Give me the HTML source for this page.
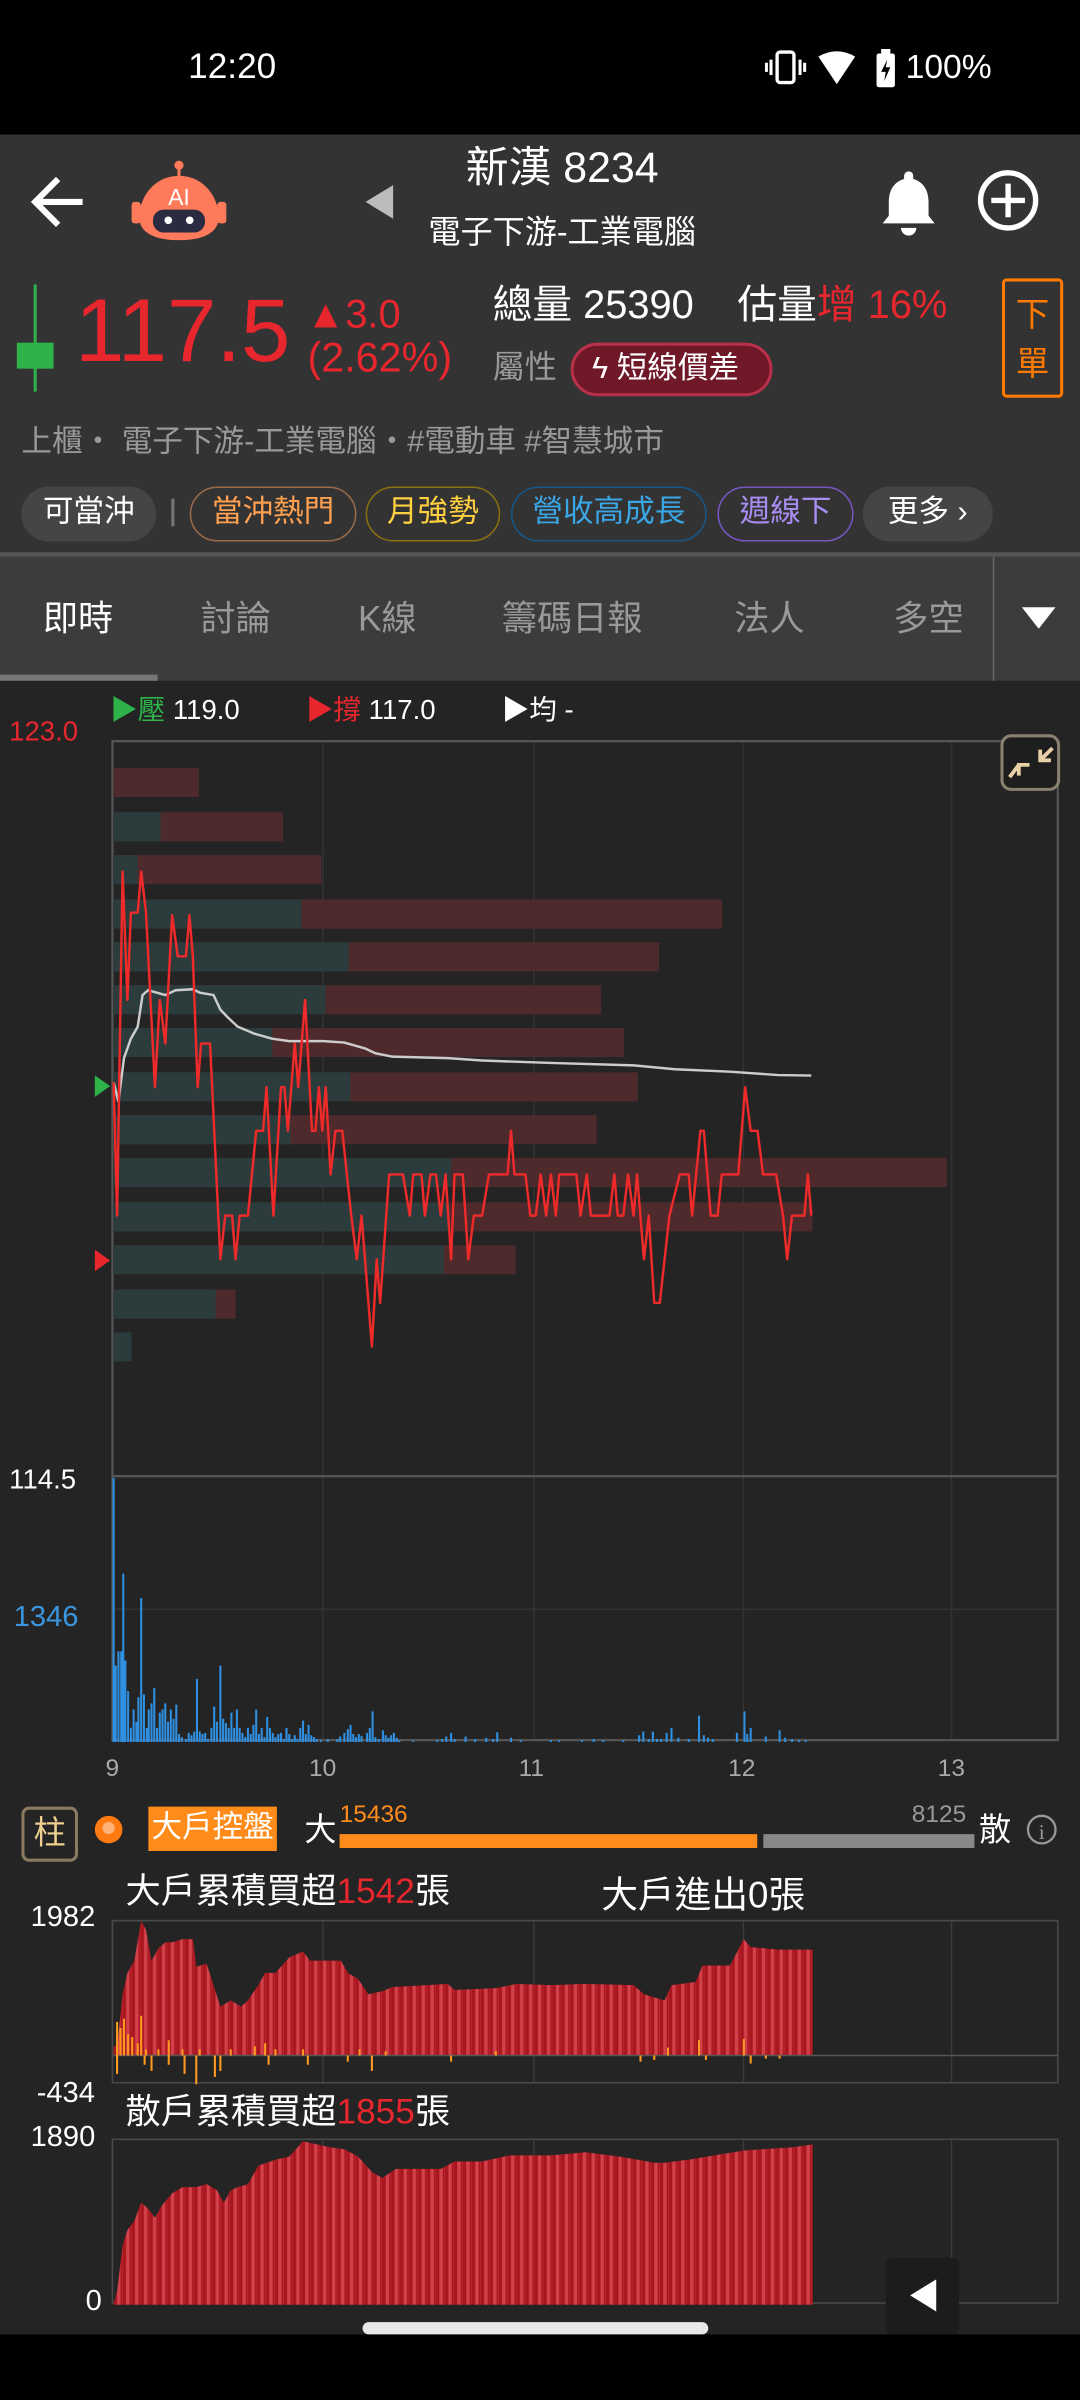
<!DOCTYPE html>
<html><head><meta charset="utf-8">
<style>
*{margin:0;padding:0;box-sizing:border-box}
html,body{width:1080px;height:2400px;overflow:hidden;background:#000}
#w{position:absolute;left:0;top:0;width:706px;height:1569px;transform:scale(1.52975);transform-origin:0 0;font-family:"Liberation Sans","Noto Sans CJK TC",sans-serif;color:#fff;background:#242424}
.a{position:absolute;white-space:nowrap;line-height:1}
.chip{position:absolute;top:318px;height:36px;border-radius:18px;border:1.5px solid;font-size:20px;line-height:33px;text-align:center}
</style></head><body><div id="w">
<!-- status bar -->
<div class="a" style="left:0;top:0;width:706px;height:88px;background:#000"></div>
<div class="a" style="left:123px;top:32px;font-size:23px">12:20</div>
<svg class="a" style="left:500px;top:31px" width="60" height="26" viewBox="0 0 60 26">
<rect x="8" y="3" width="11" height="20" rx="2" fill="none" stroke="#fff" stroke-width="2.2"/>
<path d="M4 8v10M1 10v6M23 8v10M26 10v6" stroke="#fff" stroke-width="2"/>
<path d="M35 6 Q47 -1 59 6 L47 24Z" fill="#fff"/></svg>
<svg class="a" style="left:570px;top:32px" width="18" height="26" viewBox="0 0 18 26">
<rect x="3" y="3" width="12" height="22" rx="1.5" fill="#fff"/><rect x="6" y="0" width="6" height="4" fill="#fff"/>
<path d="M10 7 L6 15 H9 L8 21 L12 12 H9 Z" fill="#000"/></svg>
<div class="a" style="left:592px;top:33px;font-size:22px">100%</div>
<!-- header -->
<div class="a" style="left:0;top:88px;width:706px;height:274px;background:#333"></div>
<svg class="a" style="left:18px;top:112px" width="40" height="40" viewBox="0 0 40 40"><path d="M36 20H6M20 5L5 20L20 35" stroke="#fff" stroke-width="4" fill="none"/></svg>
<svg class="a" style="left:86px;top:104px" width="62" height="56" viewBox="0 0 62 56">
<line x1="31" y1="2" x2="31" y2="12" stroke="#ff7a5a" stroke-width="2"/><circle cx="31" cy="4" r="3" fill="#ff7a5a"/>
<rect x="0" y="28" width="6" height="14" rx="2" fill="#ff7a5a"/><rect x="56" y="28" width="6" height="14" rx="2" fill="#ff7a5a"/>
<path d="M31 11C14 11 5 26 5 38C5 48 15 53 31 53C47 53 57 48 57 38C57 26 48 11 31 11Z" fill="#ff7a5a"/>
<rect x="14" y="33" width="34" height="15" rx="7" fill="#2a2a40"/><circle cx="24" cy="40" r="2.5" fill="#fff"/><circle cx="38" cy="40" r="2.5" fill="#fff"/>
<text x="31" y="30" font-size="15" fill="#fff" text-anchor="middle" font-family="Liberation Sans">AI</text></svg>
<svg class="a" style="left:237px;top:119px" width="22" height="26"><path d="M20 2V24L2 13Z" fill="#bbb"/></svg>
<div class="a" style="left:0;width:735px;text-align:center;top:96px;font-size:28px">新漢 8234</div>
<div class="a" style="left:0;width:735px;text-align:center;top:142px;font-size:21px">電子下游-工業電腦</div>
<svg class="a" style="left:574px;top:110px" width="40" height="44" viewBox="0 0 40 44"><path d="M20 2a3 3 0 0 1 3 3v2c7 2 10 8 10 15v9l4 5H3l4-5v-9c0-7 3-13 10-15V5a3 3 0 0 1 3-3z" fill="#fff"/><path d="M15 39a5 5 0 0 0 10 0z" fill="#fff"/></svg>
<svg class="a" style="left:638px;top:110px" width="42" height="42" viewBox="0 0 42 42"><circle cx="21" cy="21" r="18" fill="none" stroke="#fff" stroke-width="3.5"/><path d="M21 10V32M10 21H32" stroke="#fff" stroke-width="3.5"/></svg>
<!-- price -->
<div class="a" style="left:22px;top:186px;width:2px;height:70px;background:#2db34a"></div>
<div class="a" style="left:11px;top:224px;width:24px;height:17px;background:#2db34a"></div>
<div class="a" style="left:49px;top:188px;font-size:58px;color:#e8262e">117.5</div>
<div class="a" style="left:200px;top:192px;font-size:26px;color:#e8262e">▲3.0</div>
<div class="a" style="left:201px;top:221px;font-size:27px;color:#e8262e">(2.62%)</div>
<div class="a" style="left:322px;top:186px;font-size:26px">總量 25390</div>
<div class="a" style="left:482px;top:186px;font-size:26px">估量<span style="color:#e8262e">增 16%</span></div>
<div class="a" style="left:322px;top:230px;font-size:21px;color:#999">屬性</div>
<div class="a" style="left:373px;top:224px;width:132px;height:35px;border-radius:18px;background:#6e1828;border:2px solid #b8304a;font-size:20px;line-height:30px;padding-left:12px">ϟ 短線價差</div>
<div class="a" style="left:655px;top:182px;width:40px;height:78px;border:2px solid #ff7a00;border-radius:3px;color:#ff7a00;font-size:22px;line-height:32px;text-align:center;padding-top:6px;white-space:normal">下<br>單</div>
<div class="a" style="left:14px;top:279px;font-size:20px;color:#999">上櫃‧ 電子下游-工業電腦‧#電動車 #智慧城市</div>
<!-- chips -->
<div class="chip" style="left:14px;width:88px;background:#454545;border-color:#454545;color:#fff">可當沖</div>
<div class="a" style="left:112px;top:326px;width:2px;height:18px;background:#777"></div>
<div class="chip" style="left:124px;width:109px;border-color:#9a6a48;color:#ffa050">當沖熱門</div>
<div class="chip" style="left:239px;width:88px;border-color:#8a7010;color:#ffd040">月強勢</div>
<div class="chip" style="left:334px;width:128px;border-color:#16578a;color:#3aa6e6">營收高成長</div>
<div class="chip" style="left:469px;width:89px;border-color:#7656c0;color:#a88cf2">週線下</div>
<div class="chip" style="left:564px;width:85px;background:#454545;border-color:#454545;color:#fff">更多 ›</div>
<!-- tabs -->
<div class="a" style="left:0;top:361px;width:706px;height:3px;background:#555"></div>
<div class="a" style="left:0;top:364px;width:706px;height:81px;background:#3c3c3c"></div>
<div class="a" style="left:0;top:441px;width:103px;height:4px;background:#777"></div>
<div class="a" style="left:649px;top:364px;width:1px;height:81px;background:#666"></div>
<div class="a" style="left:28px;top:393px;font-size:23px">即時</div>
<div class="a" style="left:131px;top:393px;font-size:23px;color:#999">討論</div>
<div class="a" style="left:234px;top:393px;font-size:23px;color:#999">K線</div>
<div class="a" style="left:328px;top:393px;font-size:23px;color:#999">籌碼日報</div>
<div class="a" style="left:480px;top:393px;font-size:23px;color:#999">法人</div>
<div class="a" style="left:584px;top:393px;font-size:23px;color:#999">多空</div>
<svg class="a" style="left:668px;top:396px" width="22" height="16"><path d="M0 1H22L11 15Z" fill="#fff"/></svg>
<!-- chart legend -->
<div class="a" style="left:72px;top:455px;font-size:18px"><span style="color:#2db34a">▶壓</span> 119.0</div>
<div class="a" style="left:200px;top:455px;font-size:18px"><span style="color:#e8262e">▶撐</span> 117.0</div>
<div class="a" style="left:328px;top:455px;font-size:18px">▶均 -</div>
<div class="a" style="left:6px;top:469px;font-size:18px;color:#e8262e">123.0</div>
<div class="a" style="left:6px;top:958px;font-size:18px">114.5</div>
<div class="a" style="left:9px;top:1048px;font-size:19px;color:#3a96e0">1346</div>
<svg class="a" style="left:0;top:0" width="706" height="1569" viewBox="0 0 706 1569">
<g stroke="#333" stroke-width="1">
<line x1="211" y1="484" x2="211" y2="1138"/><line x1="349" y1="484" x2="349" y2="1138"/><line x1="486" y1="484" x2="486" y2="1138"/><line x1="622" y1="484" x2="622" y2="1138"/>
<line x1="73" y1="1052" x2="692" y2="1052"/>
</g>
<rect x="73.5" y="484.5" width="618" height="653" fill="none" stroke="#555" stroke-width="1.5"/>
<line x1="73" y1="965" x2="692" y2="965" stroke="#555" stroke-width="1.5"/>
<g fill="#4e2a2c">
<rect x="74" y="502" width="56" height="19"/><rect x="74" y="531" width="111" height="19"/><rect x="74" y="559" width="136" height="19"/><rect x="74" y="588" width="398" height="19"/><rect x="74" y="616" width="357" height="19"/><rect x="74" y="644" width="319" height="19"/><rect x="74" y="672" width="334" height="19"/><rect x="74" y="701" width="343" height="19"/><rect x="74" y="729" width="316" height="19"/><rect x="74" y="757" width="545" height="19"/><rect x="74" y="786" width="457" height="19"/><rect x="74" y="814" width="263" height="19"/><rect x="74" y="843" width="80" height="19"/></g>
<g fill="#2c3c3c">
<rect x="74" y="531" width="31" height="19"/><rect x="74" y="559" width="16" height="19"/><rect x="74" y="588" width="123" height="19"/><rect x="74" y="616" width="154" height="19"/><rect x="74" y="644" width="139" height="19"/><rect x="74" y="672" width="104" height="19"/><rect x="74" y="701" width="155" height="19"/><rect x="74" y="729" width="116" height="19"/><rect x="74" y="757" width="221" height="19"/><rect x="74" y="786" width="220" height="19"/><rect x="74" y="814" width="216" height="19"/><rect x="74" y="843" width="67" height="19"/><rect x="74" y="871" width="12" height="19"/></g>
<path d="M62 703L72 710L62 717Z" fill="#2db34a"/><path d="M62 817L72 824L62 831Z" fill="#e8262e"/>
<g transform="translate(0,444.5) scale(0.4502,0.3169)" fill="none" stroke-linejoin="round">
<polyline vector-effect="non-scaling-stroke" stroke="#ccc" stroke-width="1.6" points="165,830 172,870 180,780 190,740 200,715 207,650 215,640 240,650 255,640 280,638 290,645 310,650 320,680 330,695 345,715 370,730 395,740 420,745 470,745 500,748 530,760 545,770 570,777 650,780 700,785 800,790 920,795 980,803 1060,808 1130,815 1178,816"/>
<polyline vector-effect="non-scaling-stroke" stroke="#ee2a2a" stroke-width="1.6" points="165,830 170,1105 178,395 185,660 190,480 200,480 205,395 212,480 225,840 232,660 240,750 250,485 258,570 270,570 275,485 280,570 287,840 292,750 305,750 320,1195 327,1105 337,1105 342,1195 348,1105 360,1105 372,930 382,930 387,840 397,1105 408,840 413,840 418,930 428,750 433,840 443,660 453,930 458,930 463,840 468,930 473,840 480,1020 487,930 497,930 510,1105 518,1195 525,1105 540,1375 547,1195 552,1285 565,1020 585,1020 595,1105 600,1020 612,1020 617,1105 625,1020 633,1020 640,1105 647,1020 655,1195 660,1020 672,1020 680,1195 688,1105 700,1105 710,1020 717,1020 737,1020 742,930 747,1020 763,1020 770,1105 778,1105 785,1020 793,1105 800,1020 807,1105 812,1020 837,1020 843,1105 852,1020 858,1105 885,1105 892,1020 897,1105 905,1105 912,1020 920,1105 925,1020 935,1195 942,1105 950,1285 958,1285 965,1195 972,1105 987,1020 1000,1020 1005,1105 1017,930 1022,930 1032,1105 1042,1105 1048,1020 1072,1020 1082,840 1090,930 1100,930 1108,1020 1127,1020 1137,1105 1143,1195 1150,1105 1168,1105 1173,1020 1178,1105"/>
</g>
<!-- volume -->
<g transform="translate(0,941.4) scale(0.4502,0.4003)" stroke="#2f8fe0" stroke-width="3">
<path d="M165 493V62M168 493V368M172 493V345M176 493V345M179 493V218M182 493V360M186 493V410M190 493V470M194 493V440M198 493V460M201 493V420M205 493V258M209 493V415M213 493V470M216 493V440M220 493V430M224 493V405M228 493V470M232 493V445M236 493V440M240 493V430M244 493V460M248 493V440M252 493V455M256 493V432M260 493V480M264 493V485M270 493V488M274 493V478M278 493V482M282 493V476M286 493V390M290 493V476M294 493V480M298 493V478M302 493V488M307 493V470M311 493V435M315 493V460M320 493V368M324 493V455M328 493V462M332 493V470M336 493V445M340 493V470M344 493V440M348 493V470M352 493V478M356 493V485M360 493V470M364 493V480M368 493V465M372 493V440M376 493V480M380 493V470M384 493V485M388 493V452M392 493V470M396 493V478M400 493V485M404 493V480M408 493V478M412 493V488M416 493V470M420 493V480M424 493V488M428 493V482M432 493V488M436 493V470M440 493V458M444 493V480M448 493V465M452 493V482M456 493V485M460 493V488M466 493V490M476 493V488M490 493V488M494 493V484M500 493V478M505 493V472M509 493V465M513 493V480M517 493V485M521 493V480M525 493V483M533 493V478M537 493V470M541 493V443M545 493V485M550 493V488M556 493V474M560 493V482M564 493V486M568 493V482M572 493V478M576 493V486M580 493V490M600 493V491M635 493V490M642 493V488M648 493V484M655 493V478M660 493V488M676 493V484M690 493V488M706 493V486M716 493V488M722 493V477M742 493V486M756 493V490M800 493V490M812 493V490M845 493V490M862 493V488M876 493V490M905 493V490M928 493V482M934 493V476M942 493V488M948 493V476M954 493V488M960 493V488M968 493V478M975 493V470M985 493V486M1000 493V488M1015 493V450M1022 493V482M1028 493V486M1035 493V488M1070 493V478M1081 493V443M1085 493V480M1090 493V470M1112 493V484M1132 493V474M1140 493V486M1150 493V488M1160 493V490M1170 493V490"/>
</g>
<g font-size="16" fill="#aaa" font-family="Liberation Sans"><text x="69" y="1161">9</text><text x="202" y="1161">10</text><text x="339" y="1161">11</text><text x="476" y="1161">12</text><text x="613" y="1161">13</text></g>
<!-- expand btn -->
<rect x="655" y="481" width="37" height="35" rx="6" fill="#1e1e1e" stroke="#8a8070" stroke-width="2"/>
<path d="M680 490L680 497L687 497M680 497L688 489M666 507L666 500L673 500M666 500L660 508" stroke="#e8d0a8" stroke-width="2.5" fill="none"/>
<!-- big/small chart -->
<line x1="222" y1="1203.5" x2="495" y2="1203.5" stroke="#ff8c1a" stroke-width="9"/>
<line x1="499" y1="1203.5" x2="637" y2="1203.5" stroke="#888" stroke-width="9"/>
<circle cx="71" cy="1196" r="9" fill="#ff7a10"/><circle cx="71" cy="1195" r="4" fill="#ffc090" opacity=".8"/>
<circle cx="681" cy="1196" r="9" fill="none" stroke="#999" stroke-width="1.5"/><text x="681" y="1202" font-size="14" fill="#999" text-anchor="middle" font-family="Liberation Serif">i</text>
<g stroke="#3a3a3a" stroke-width="1"><line x1="349" y1="1255" x2="349" y2="1362"/><line x1="486" y1="1255" x2="486" y2="1362"/><line x1="622" y1="1255" x2="622" y2="1362"/><line x1="349" y1="1398" x2="349" y2="1505"/><line x1="486" y1="1398" x2="486" y2="1505"/><line x1="622" y1="1398" x2="622" y2="1505"/><line x1="211" y1="1255" x2="211" y2="1362"/><line x1="211" y1="1398" x2="211" y2="1505"/></g>
<rect x="73.5" y="1255.5" width="618" height="106" fill="none" stroke="#4a4a4a"/>
<rect x="73.5" y="1398.5" width="618" height="107" fill="none" stroke="#4a4a4a"/>
<defs><pattern id="st" width="13" height="10" patternUnits="userSpaceOnUse"><rect width="13" height="10" fill="#a8161e"/><rect x="1" width="5" height="10" fill="#d2404a"/><rect x="8" width="1" height="10" fill="#c22a34"/></pattern></defs>
<g transform="translate(0,941.4) scale(0.4502,0.4003)">
<polygon fill="url(#st)" points="165,1005 165,990 170,990 178,905 185,870 195,850 205,785 212,800 220,850 230,830 240,820 250,820 265,815 280,815 285,860 300,855 310,890 320,925 335,915 350,925 360,915 375,890 385,870 400,870 420,845 440,835 450,850 495,850 505,870 520,880 535,905 555,900 570,893 620,890 650,888 660,898 720,895 750,888 800,890 850,888 920,890 935,905 965,915 975,890 1010,885 1020,858 1060,858 1080,815 1090,828 1130,832 1180,832 1180,1005"/>
<line x1="165" y1="1005" x2="1537" y2="1005" stroke="#555" stroke-width="2.5"/>
<path stroke="#ff9a20" stroke-width="3" d="M170 1005V950M175 1005V960M180 1005V945M186 1005V970M192 1005V975M200 1005V985M205 1005V940M212 1005V995M230 1005V995M245 1005V980M265 1005V995M290 1005V995M335 1005V995M370 1005V990M385 1005V985M400 1005V995M440 1005V995M522 1005V995M560 1005V998M720 1005V998M970 1005V992M1015 1005V980M1080 1005V978M170 1005V1035M210 1005V1020M220 1005V1030M245 1005V1020M285 1005V1052M268 1005V1035M312 1005V1040M320 1005V1030M390 1005V1020M447 1005V1020M505 1005V1015M540 1005V1030M655 1005V1015M930 1005V1015M950 1005V1012M1025 1005V1012M1090 1005V1018M1112 1005V1010M1132 1005V1010"/>
<polygon fill="url(#st)" points="165,1412 165,1410 170,1390 178,1315 185,1290 195,1275 205,1245 215,1255 225,1270 235,1250 250,1230 265,1220 285,1220 300,1215 315,1225 325,1245 335,1225 345,1220 360,1215 375,1185 400,1175 420,1170 440,1145 460,1150 480,1155 500,1158 520,1170 540,1195 555,1205 575,1190 600,1190 640,1190 660,1178 700,1178 740,1168 800,1168 850,1163 900,1170 950,1180 965,1180 1000,1175 1080,1160 1150,1155 1180,1150 1180,1412"/>
</g>
<rect x="579" y="1476" width="48" height="50" rx="4" fill="#1c1c1c"/>
<path d="M612 1490V1511L595 1500.5Z" fill="#fff"/>
<rect x="0" y="1526" width="706" height="43" fill="#000"/>
<rect x="237" y="1518" width="226" height="8" rx="4" fill="#e8e8e8"/>
</svg>
<div class="a" style="left:14px;top:1181px;width:37px;height:36px;border:2px solid #8a7a60;border-radius:5px;color:#f0d090;font-size:21px;line-height:32px;text-align:center">柱</div>
<div class="a" style="left:97px;top:1181px;width:84px;height:29px;background:#ff8c1a;font-size:20px;line-height:29px;text-align:center">大戶控盤</div>
<div class="a" style="left:199px;top:1186px;font-size:21px">大</div>
<div class="a" style="left:222px;top:1179px;font-size:16px;color:#ff8c1a">15436</div>
<div class="a" style="left:596px;top:1179px;font-size:16px;color:#999">8125</div>
<div class="a" style="left:640px;top:1186px;font-size:21px">散</div>
<div class="a" style="left:82px;top:1225px;font-size:23px">大戶累積買超<span style="color:#e8262e">1542</span>張</div>
<div class="a" style="left:393px;top:1228px;font-size:24px">大戶進出0張</div>
<div class="a" style="left:20px;top:1244px;font-size:19px">1982</div>
<div class="a" style="left:24px;top:1359px;font-size:19px">-434</div>
<div class="a" style="left:82px;top:1369px;font-size:23px">散戶累積買超<span style="color:#e8262e">1855</span>張</div>
<div class="a" style="left:20px;top:1388px;font-size:19px">1890</div>
<div class="a" style="left:56px;top:1495px;font-size:19px">0</div>
</div></body></html>
